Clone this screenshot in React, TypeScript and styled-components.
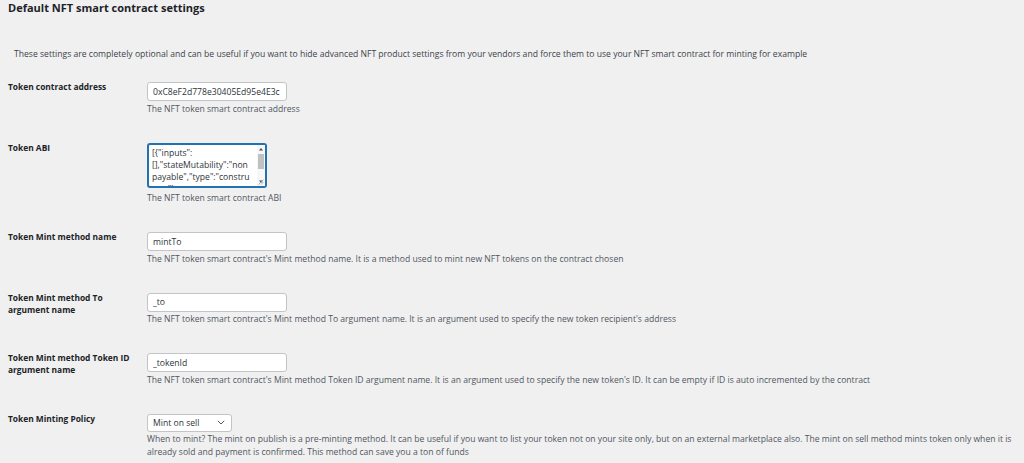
import React from "react";
import styled, { createGlobalStyle } from "styled-components";

const GlobalStyle = createGlobalStyle`
  html, body {
    margin: 0;
    padding: 0;
    background: #f0f0f1;
  }
  body {
    font-family: "Open Sans", "Noto Sans", sans-serif;
    color: #3c434a;
    font-size: 8.6px;
  }
  * { box-sizing: border-box; }
`;

const Page = styled.div`
  display: flex;
  flex-direction: column;
  padding: 0 4px 0 8px;
  width: 1024px;
  height: 463px;
  overflow: hidden;
`;

const Heading = styled.h2`
  margin: 0;
  font-size: 11px;
  line-height: 16px;
  font-weight: 700;
  color: #1d2327;
`;

const Intro = styled.p`
  margin: 31.5px 0 0 6px;
  font-size: 8.6px;
  line-height: 13px;
  color: #3c434a;
`;

const Form = styled.div`
  display: flex;
  flex-direction: column;
  margin-top: 8.5px;
`;

const Row = styled.div`
  display: grid;
  grid-template-columns: 139px 1fr;
`;

const Label = styled.label`
  padding-top: 12px;
  font-size: 8.4px;
  line-height: 12px;
  font-weight: 700;
  color: #1d2327;
  white-space: nowrap;
`;

const Field = styled.div`
  padding: 13px 0 14px 0;
  display: flex;
  flex-direction: column;
  align-items: flex-start;
`;

const TextInput = styled.input`
  width: 140px;
  height: 19px;
  margin: 0;
  padding: 0 5px;
  border: 1px solid #c3c4c7;
  border-radius: 3px;
  background: #fff;
  font-family: inherit;
  font-size: 8.6px;
  color: #2c3338;
  outline: none;
`;

const Desc = styled.p<{ $gap?: number }>`
  margin: ${(p) => p.$gap ?? 1.5}px 0 0 0;
  font-size: 8.6px;
  line-height: 13px;
  color: #50575e;
`;

const AreaWrap = styled.div`
  position: relative;
  width: 120px;
  height: 45px;
`;

const TextArea = styled.textarea`
  display: block;
  width: 120px;
  height: 45px;
  margin: 0;
  padding: 2px 12px 0 3px;
  border: 2px solid #2271b1;
  border-radius: 3px;
  background: #fff;
  font-family: inherit;
  font-size: 8.6px;
  line-height: 12px;
  color: #2c3338;
  resize: none;
  overflow: hidden;
  outline: none;
`;

const ScrollBar = styled.div`
  position: absolute;
  top: 2px;
  right: 2px;
  bottom: 2px;
  width: 8px;
  display: flex;
  flex-direction: column;
  align-items: center;
  background: #f7f7f7;
`;

const Arrow = styled.svg`
  display: block;
  width: 8px;
  height: 8px;
  flex: none;
`;

const Thumb = styled.div`
  width: 6px;
  height: 15px;
  background: #c1c1c1;
  margin-top: 1px;
`;

const Spacer = styled.div`
  flex: 1;
`;

const Grip = styled.svg`
  position: absolute;
  right: 3px;
  bottom: 3px;
  width: 6px;
  height: 6px;
`;

const SelectWrap = styled.div`
  position: relative;
  width: 85px;
  height: 18px;
`;

const Select = styled.select`
  appearance: none;
  -webkit-appearance: none;
  width: 85px;
  height: 18px;
  margin: 0;
  padding: 0 16px 0 5px;
  border: 1px solid #c3c4c7;
  border-radius: 3px;
  background: #fff;
  font-family: inherit;
  font-size: 8.6px;
  color: #2c3338;
  outline: none;
`;

const Chevron = styled.svg`
  position: absolute;
  right: 7px;
  top: 6px;
  width: 8px;
  height: 5px;
  pointer-events: none;
`;

const abi =
  '[{"inputs":[],"stateMutability":"nonpayable","type":"constructor"},{"anonymous":false,"inputs":[{"indexed":true,"internalType":"address","name":"owner","type":"address"}],"name":"Approval","type":"event"}]';

type TextRowProps = { label: React.ReactNode; value: string; desc: string };

const TextRow = ({ label, value, desc }: TextRowProps) => (
  <Row>
    <Label>{label}</Label>
    <Field>
      <TextInput defaultValue={value} />
      <Desc>{desc}</Desc>
    </Field>
  </Row>
);

export default function App() {
  return (
    <>
      <GlobalStyle />
      <Page>
        <Heading>Default NFT smart contract settings</Heading>
        <Intro>
          These settings are completely optional and can be useful if you want to hide advanced NFT product
          settings from your vendors and force them to use your NFT smart contract for minting for example
        </Intro>
        <Form>
          <TextRow
            label="Token contract address"
            value="0xC8eF2d778e30405Ed95e4E3c"
            desc="The NFT token smart contract address"
          />
          <Row>
            <Label>Token ABI</Label>
            <Field>
              <AreaWrap>
                <TextArea defaultValue={abi} spellCheck={false} />
                <ScrollBar>
                  <Arrow viewBox="0 0 8 8">
                    <path d="M2 5.5 L4 3 L6 5.5 Z" fill="#505050" />
                  </Arrow>
                  <Thumb />
                  <Spacer />
                  <Arrow viewBox="0 0 8 8">
                    <path d="M2 2.5 L4 5 L6 2.5 Z" fill="#505050" />
                  </Arrow>
                </ScrollBar>
                <Grip viewBox="0 0 6 6">
                  <path d="M0.5 5.5 L5.5 0.5 M3 5.5 L5.5 3" stroke="#9a9a9a" strokeWidth="0.8" />
                </Grip>
              </AreaWrap>
              <Desc $gap={4.5}>The NFT token smart contract ABI</Desc>
            </Field>
          </Row>
          <TextRow
            label="Token Mint method name"
            value="mintTo"
            desc="The NFT token smart contract's Mint method name. It is a method used to mint new NFT tokens on the contract chosen"
          />
          <TextRow
            label={<>Token Mint method To<br />argument name</>}
            value="_to"
            desc="The NFT token smart contract's Mint method To argument name. It is an argument used to specify the new token recipient's address"
          />
          <TextRow
            label={<>Token Mint method Token ID<br />argument name</>}
            value="_tokenId"
            desc="The NFT token smart contract's Mint method Token ID argument name. It is an argument used to specify the new token's ID. It can be empty if ID is auto incremented by the contract"
          />
          <Row>
            <Label>Token Minting Policy</Label>
            <Field>
              <SelectWrap>
                <Select defaultValue="sell">
                  <option value="sell">Mint on sell</option>
                  <option value="publish">Mint on publish</option>
                </Select>
                <Chevron viewBox="0 0 8 5">
                  <path d="M0.8 0.8 L4 4 L7.2 0.8" fill="none" stroke="#50575e" strokeWidth="1" />
                </Chevron>
              </SelectWrap>
              <Desc $gap={1.5}>
                When to mint? The mint on publish is a pre-minting method. It can be useful if you want to list your
                token not on your site only, but on an external marketplace also. The mint on sell method mints token
                only when it is already sold and payment is confirmed. This method can save you a ton of funds
              </Desc>
            </Field>
          </Row>
        </Form>
      </Page>
    </>
  );
}
